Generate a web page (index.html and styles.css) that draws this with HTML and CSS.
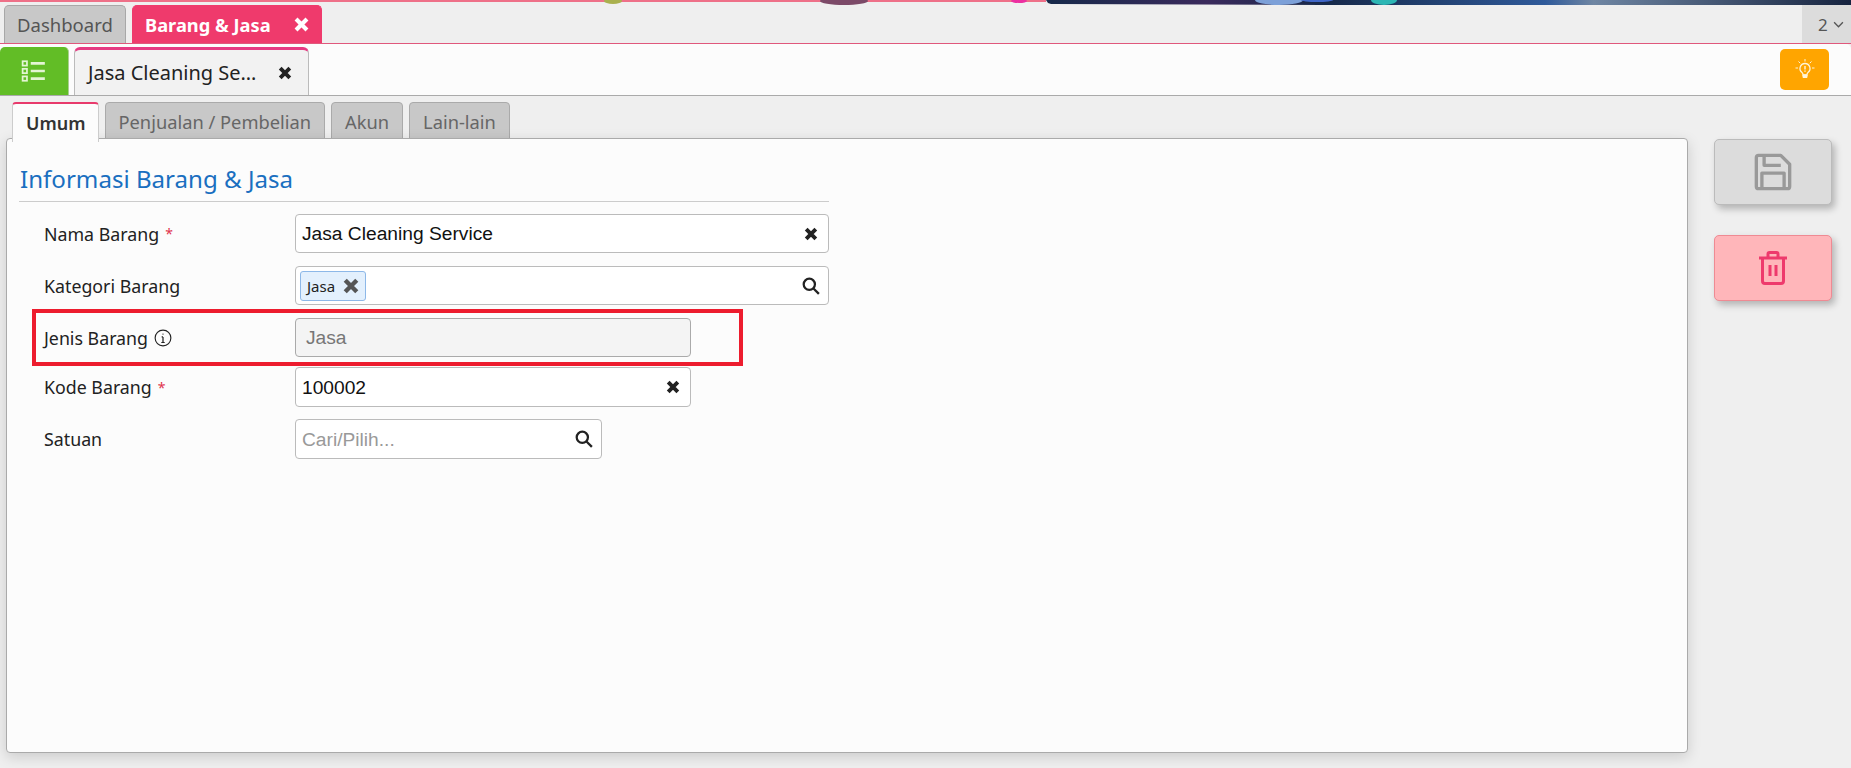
FILE: index.html
```html
<!DOCTYPE html>
<html>
<head>
  <title>Barang &amp; Jasa</title>
  <link rel="stylesheet" href="styles.css">
</head>
<body>
  <svg class="strip" width="1851" height="5" viewBox="0 0 1851 5">
    <defs>
      <linearGradient id="stripDark" x1="0" x2="1" y1="0" y2="0">
        <stop offset="0" stop-color="#16294a"/>
        <stop offset="0.2" stop-color="#3a2a5c"/>
        <stop offset="0.35" stop-color="#16294a"/>
        <stop offset="0.62" stop-color="#2f5a9a"/>
        <stop offset="0.68" stop-color="#6f86a3"/>
        <stop offset="1" stop-color="#16233f"/>
      </linearGradient>
    </defs>
    <rect width="1046" height="2" fill="#ee7088"/>
    <path d="M1046 0h805v5h-530l-270-1-3-1-2-3z" fill="url(#stripDark)"/>
    <ellipse cx="613" cy="1" rx="9" ry="3" fill="#a9b04e"/>
    <ellipse cx="844" cy="1" rx="24" ry="4" fill="#7c4a68"/>
    <ellipse cx="1019" cy="1" rx="8" ry="2" fill="#ec2fa0"/>
    <ellipse cx="1279" cy="0" rx="24" ry="5" fill="#7ca0d8"/>
    <ellipse cx="1317" cy="0" rx="16" ry="2" fill="#3f66c8"/>
    <ellipse cx="1384" cy="0" rx="13" ry="5" fill="#2cb6b4"/>
  </svg>

  <div class="topbar">
    <div class="top-tab">Dashboard</div>
    <div class="top-tab active">
      Barang &amp; Jasa
      <svg class="x-icon" width="17" height="17" viewBox="0 0 14 14"><path d="M2.500 2.500l9 9M11.500 2.500l-9 9"/></svg>
    </div>
    <div class="tab-count">
      2
      <svg width="11" height="7" viewBox="0 0 10 6"><path d="M1 1l4 4 4-4" fill="none" stroke="#555" stroke-width="1.200"/></svg>
    </div>
  </div>

  <div class="subbar">
    <button class="list-btn">
      <svg width="26" height="24" viewBox="0 0 24 22" fill="none" stroke="#e4f5d4">
        <rect x="1.500" y="2" width="4" height="4" stroke-width="1.600"/>
        <rect x="1.500" y="9" width="4" height="4" stroke-width="1.600"/>
        <rect x="1.500" y="16" width="4" height="4" stroke-width="1.600"/>
        <path d="M9 4h13M9 11h13M9 18h13" stroke-width="2.400"/>
      </svg>
    </button>
    <div class="sub-tab">
      <span>Jasa Cleaning Se…</span>
      <svg class="x-icon dark" width="16" height="16" viewBox="0 0 14 14"><path d="M2.800 2.800l8.400 8.400M11.200 2.800l-8.400 8.400"/></svg>
    </div>
    <button class="tip-btn">
      <svg width="20" height="22" viewBox="0 0 20 22" fill="none" stroke="#fff4d8">
        <path d="M10 4.500a5 5 0 0 0-3 9c.7.6 1 1.200 1 2.500h4c0-1.300.3-1.900 1-2.500a5 5 0 0 0-3-9z" stroke-width="1.300"/>
        <path d="M8 16h4v2.500h-4z" fill="#fff4d8" stroke-width="1"/>
        <path d="M10 7v3.500M10 11.500v1.200" stroke-width="1.400"/>
        <path d="M10 0v2.500M3.500 2.500l1.700 1.700M16.500 2.500l-1.700 1.700M0.500 9h2.500M17 9h2.500" stroke-width="1"/>
      </svg>
    </button>
  </div>

  <div class="content">
    <div class="left">
      <div class="tabs">
        <div class="tab active">Umum</div>
        <div class="tab">Penjualan / Pembelian</div>
        <div class="tab">Akun</div>
        <div class="tab">Lain-lain</div>
      </div>

      <div class="panel">
        <h3 class="section-title">Informasi Barang &amp; Jasa</h3>

        <div class="row">
          <label>Nama Barang <span class="req">*</span></label>
          <div class="field w-full">
            <span class="value">Jasa Cleaning Service</span>
            <svg class="x-icon dark" width="16" height="16" viewBox="0 0 14 14"><path d="M2.800 2.800l8.400 8.400M11.200 2.800l-8.400 8.400"/></svg>
          </div>
        </div>

        <div class="row">
          <label>Kategori Barang</label>
          <div class="field w-full tag-field">
            <span class="tag">
              Jasa
              <svg class="x-icon grey" width="18" height="18" viewBox="0 0 14 14"><path d="M2.500 2.500l9 9M11.500 2.500l-9 9"/></svg>
            </span>
            <svg class="search-icon" width="18" height="18" viewBox="0 0 16 16"><circle cx="6.500" cy="6.500" r="5"/><path d="M10.200 10.200l4.800 4.800"/></svg>
          </div>
        </div>

        <div class="row row-jenis">
          <label>Jenis Barang
            <svg class="info-icon" width="18" height="18" viewBox="0 0 16 16" fill="none" stroke="#222"><circle cx="8" cy="8" r="7"/><path d="M8 7v5M6.500 12h3M6.800 7H8" stroke-width="1.100"/><circle cx="8" cy="4.500" r=".6" fill="#222" stroke="none"/></svg>
          </label>
          <div class="field w-mid disabled"><span class="value">Jasa</span></div>
        </div>

        <div class="row row-kode">
          <label>Kode Barang <span class="req">*</span></label>
          <div class="field w-mid">
            <span class="value">100002</span>
            <svg class="x-icon dark" width="16" height="16" viewBox="0 0 14 14"><path d="M2.800 2.800l8.400 8.400M11.200 2.800l-8.400 8.400"/></svg>
          </div>
        </div>

        <div class="row row-satuan">
          <label>Satuan</label>
          <div class="field w-small">
            <span class="value placeholder">Cari/Pilih...</span>
            <svg class="search-icon" width="18" height="18" viewBox="0 0 16 16"><circle cx="6.500" cy="6.500" r="5"/><path d="M10.200 10.200l4.800 4.800"/></svg>
          </div>
        </div>

        <div class="annotation"></div>
      </div>
    </div>

    <div class="actions">
      <button class="action save">
        <svg width="40" height="40" viewBox="0 0 36 36" fill="none" stroke="#999" stroke-width="3" stroke-linejoin="round">
          <path d="M3 5a2 2 0 0 1 2-2h20l8 8v20a2 2 0 0 1-2 2H5a2 2 0 0 1-2-2z"/>
          <path d="M10 3v9h15M8 33V19h20v14"/>
        </svg>
      </button>
      <button class="action delete">
        <svg width="30" height="34" viewBox="0 0 30 34" fill="none" stroke="#ee3a6c" stroke-width="3" stroke-linejoin="round">
          <path d="M1 7h28M10 7V3a1.500 1.500 0 0 1 1.500-1.500h7A1.500 1.500 0 0 1 20 3v4"/>
          <path d="M4.500 7v23a2.500 2.500 0 0 0 2.500 2.500h16a2.500 2.500 0 0 0 2.500-2.500V7"/>
          <path d="M12 14v11M18 14v11"/>
        </svg>
      </button>
    </div>
  </div>
</body>
</html>
```

FILE: styles.css
```css
html, body {
  margin: 0;
  height: 768px;
  overflow: hidden;
}

body {
  background-color: #efefef;
  font-family: "Noto Sans", sans-serif;
  color: #333;
}

button {
  padding: 0;
  cursor: pointer;
}

.strip {
  display: block;
}

.x-icon {
  fill: none;
  stroke: #fff;
  stroke-width: 3.4;
  flex-shrink: 0;
}

.x-icon.dark {
  stroke: #222;
}

.x-icon.grey {
  stroke: #555;
}

.search-icon {
  fill: none;
  stroke: #222;
  stroke-width: 2;
  flex-shrink: 0;
}

/* top tab row */
.topbar {
  display: flex;
  gap: 6px;
  height: 38px;
  padding-left: 4px;
  border-bottom: 1px solid #e0587c;
}

.top-tab {
  box-sizing: border-box;
  display: flex;
  align-items: center;
  width: 122px;
  padding-left: 12px;
  background-color: #c8c8c8;
  border: 1px solid #a8a8a8;
  border-bottom: none;
  border-radius: 5px 5px 0 0;
  font-size: 18.500px;
  color: #555;
}

.top-tab.active {
  width: 190px;
  justify-content: space-between;
  padding-right: 11px;
  background-color: #ef3a6c;
  border-color: #ef3a6c;
  font-size: 18.300px;
  font-weight: 700;
  color: #fff;
}

.tab-count {
  display: flex;
  align-items: center;
  gap: 5px;
  box-sizing: border-box;
  width: 49px;
  margin-left: auto;
  padding-left: 16px;
  background-color: #dcdcdc;
  font-size: 17px;
  color: #555;
}

/* second row */
.subbar {
  display: flex;
  align-items: flex-end;
  box-sizing: border-box;
  height: 52px;
  padding-right: 22px;
  background-color: #fcfcfc;
  border-bottom: 1px solid #aaa;
  border-top-right-radius: 5px;
}

.list-btn {
  display: flex;
  align-items: center;
  justify-content: center;
  width: 69px;
  height: 48px;
  background-color: #62bd26;
  border: none;
  border-right: 1px solid #a9cf90;
  border-radius: 5px 5px 0 0;
}

.sub-tab {
  box-sizing: border-box;
  display: flex;
  align-items: center;
  justify-content: space-between;
  width: 235px;
  height: 48px;
  margin-left: 5px;
  padding: 0 15px 0 13px;
  background-color: #f2f2f2;
  border: 1px solid #bbb;
  border-top: 3px solid #e63a82;
  border-bottom: none;
  border-radius: 6px 6px 0 0;
  font-size: 20px;
  color: #222;
}

.tip-btn {
  display: flex;
  align-items: center;
  justify-content: center;
  width: 49px;
  height: 41px;
  margin-left: auto;
  margin-bottom: 5px;
  background-color: #ffa500;
  border: none;
  border-radius: 5px;
}

/* content */
.content {
  display: flex;
  padding: 6px 0 0 6px;
}

.left {
  flex-shrink: 0;
  width: 1682px;
}

.tabs {
  display: flex;
  gap: 6px;
  padding-left: 6px;
  height: 36px;
}

.tab {
  box-sizing: border-box;
  height: 38px;
  padding: 0 13px;
  background-color: #c8c8c8;
  border: 1px solid #aaa;
  border-radius: 4px 4px 0 0;
  font-size: 18.300px;
  line-height: 38px;
  color: #666;
}

.tab.active {
  position: relative;
  z-index: 1;
  height: 40px;
  padding: 0 12px 0 13px;
  background-color: #fcfcfc;
  border-color: #ccc;
  border-top: 2px solid #e83a6c;
  border-bottom: none;
  font-size: 18px;
  font-weight: 600;
  color: #333;
}

.panel {
  position: relative;
  box-sizing: border-box;
  height: 615px;
  padding: 0 0 0 13px;
  background-color: #fcfcfc;
  border: 1px solid #aaa;
  border-radius: 4px;
  box-shadow: 0 4px 14px rgba(0, 0, 0, 0.15);
}

.section-title {
  box-sizing: border-box;
  width: 810px;
  height: 63px;
  margin: 0 0 12px -1px;
  padding: 25px 0 0 1px;
  border-bottom: 1px solid #ccc;
  font-size: 24.100px;
  font-weight: 400;
  line-height: 30px;
  color: #1a6fc0;
}

.row {
  display: flex;
  align-items: center;
  margin-bottom: 13px;
  padding-left: 24px;
}

.row-jenis {
  margin-bottom: 10px;
}

.row-kode {
  margin-bottom: 12px;
}

.row label {
  display: flex;
  align-items: center;
  gap: 6px;
  width: 251px;
  font-size: 17.800px;
  color: #222;
}

.req {
  color: #e0344c;
  font-size: 14px;
}

.field {
  box-sizing: border-box;
  display: flex;
  align-items: center;
  justify-content: space-between;
  height: 39px;
  padding: 0 8px 0 6px;
  background-color: #fff;
  border: 1px solid #bbb;
  border-radius: 4px;
  font-family: "Liberation Sans", sans-serif;
  font-size: 19.200px;
  color: #111;
}

.field > .x-icon {
  margin-right: 1px;
}

.row-kode .field,
.row-satuan .field {
  height: 40px;
}

.value {
  padding-top: 1px;
}

.w-full {
  width: 534px;
}

.w-mid {
  width: 396px;
}

.w-small {
  width: 307px;
}

.tag-field {
  padding-left: 4px;
}

.tag {
  display: flex;
  align-items: center;
  gap: 7px;
  height: 30px;
  box-sizing: border-box;
  padding: 0 5px 0 6px;
  background-color: #e3f0fd;
  border: 1px solid #8db8e8;
  border-radius: 3px;
  font-family: "Noto Sans", sans-serif;
  font-size: 15px;
  color: #222;
}

.disabled {
  padding-left: 10px;
  background-color: #f4f4f4;
  border-color: #aaa;
  color: #777;
}

.placeholder {
  color: #999;
}

.annotation {
  position: absolute;
  left: 25px;
  top: 170px;
  box-sizing: border-box;
  width: 711px;
  height: 57px;
  border: 4px solid #ed1c2e;
}

/* right buttons */
.actions {
  display: flex;
  flex-direction: column;
  gap: 30px;
  margin: 37px 0 0 26px;
}

.action {
  display: flex;
  align-items: center;
  justify-content: center;
  width: 118px;
  height: 66px;
  border-radius: 5px;
  box-shadow: 3px 4px 7px rgba(0, 0, 0, 0.25);
}

.save {
  background-color: #dcdcdc;
  border: 1px solid #bbb;
}

.delete {
  background-color: #ffb6ba;
  border: 1px solid #ef8a93;
}
```
